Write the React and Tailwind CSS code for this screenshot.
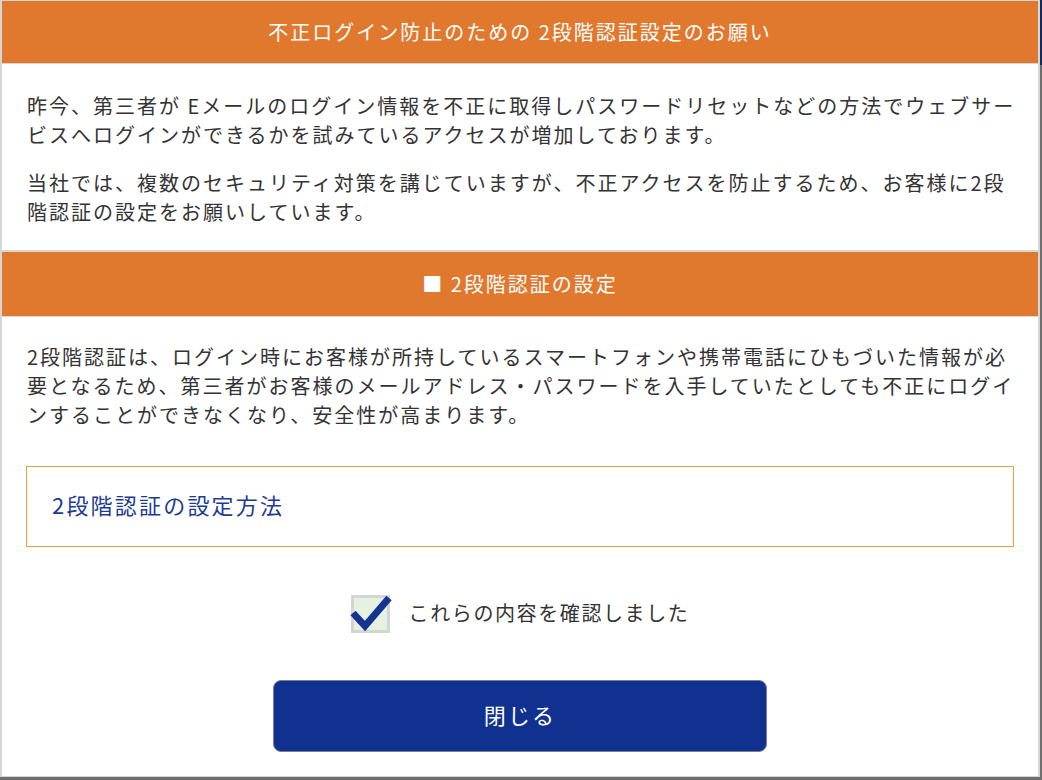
import React from "react";

const font = { fontFamily: '"Noto Sans CJK JP", "Noto Sans", sans-serif' };

export default function App() {
  return (
    <div className="relative w-[1042px] h-[780px] bg-[#6e6e6e] overflow-hidden" style={font}>
      <div className="absolute right-0 top-0 w-[2px] h-[65px] bg-[#14275e]" />
      <div className="w-[1040px] h-[777px] bg-white border-x-2 border-t border-b border-[#d6d6d6] flex flex-col">
        <div className="h-[63px] shrink-0 bg-[#e0792e] border-b border-[#d4d4d4] flex items-center justify-center">
          <span className="text-white text-[20px] tracking-[0.1em] leading-none">
            不正ログイン防止のための 2段階認証設定のお願い
          </span>
        </div>

        <div className="pl-[25px] pt-[27px] pb-[24px]">
          <p className="w-[995px] text-[20px] leading-[29px] tracking-[0.1em] text-[#333]">
            昨今、第三者が Eメールのログイン情報を不正に取得しパスワードリセットなどの方法でウェブサービスへログインができるかを試みているアクセスが増加しております。
          </p>
          <p className="mt-[19px] w-[995px] text-[20px] leading-[29px] tracking-[0.1em] text-[#333]">
            当社では、複数のセキュリティ対策を講じていますが、不正アクセスを防止するため、お客様に2段階認証の設定をお願いしています。
          </p>
        </div>

        <div className="h-[67px] shrink-0 bg-[#e0792e] border-t-2 border-b border-[#d8d8d8] flex items-center justify-center">
          <span className="text-white text-[20px] tracking-[0.1em] leading-none">■ 2段階認証の設定</span>
        </div>

        <div className="pl-[25px] pt-[25px]">
          <p className="w-[995px] text-[20px] leading-[29px] tracking-[0.1em] text-[#333]">
            2段階認証は、ログイン時にお客様が所持しているスマートフォンや携帯電話にひもづいた情報が必要となるため、第三者がお客様のメールアドレス・パスワードを入手していたとしても不正にログインすることができなくなり、安全性が高まります。
          </p>
        </div>

        <div className="mx-[24px] mt-[37px] h-[81px] border border-[#f39a45] flex items-center pl-[25px] pb-[6px]">
          <span className="text-[22px] tracking-[0.1em] text-[#1d3b95] leading-none">2段階認証の設定方法</span>
        </div>

        <div className="mt-[48px] flex items-center justify-center gap-[19px]">
          <div className="relative w-[39px] h-[38px] border-[3px] border-[#d5d5d5] bg-[#e6f1e2]">
            <svg className="absolute -left-[3px] -top-[3px] overflow-visible" width="39" height="38" viewBox="0 0 39 38">
              <path d="M2 18 L14 31 L38 3" fill="none" stroke="#143490" strokeWidth="7" strokeLinejoin="miter" />
            </svg>
          </div>
          <span className="text-[20px] tracking-[0.08em] text-[#333] leading-none pb-[2px]">これらの内容を確認しました</span>
        </div>

        <div className="mt-[47px] flex justify-center">
          <button className="w-[494px] h-[72px] rounded-[8px] bg-[#10318f] border border-[#7a7f95] text-white text-[22px] tracking-[0.1em] leading-none pb-[5px]">
            閉じる
          </button>
        </div>
      </div>
    </div>
  );
}
